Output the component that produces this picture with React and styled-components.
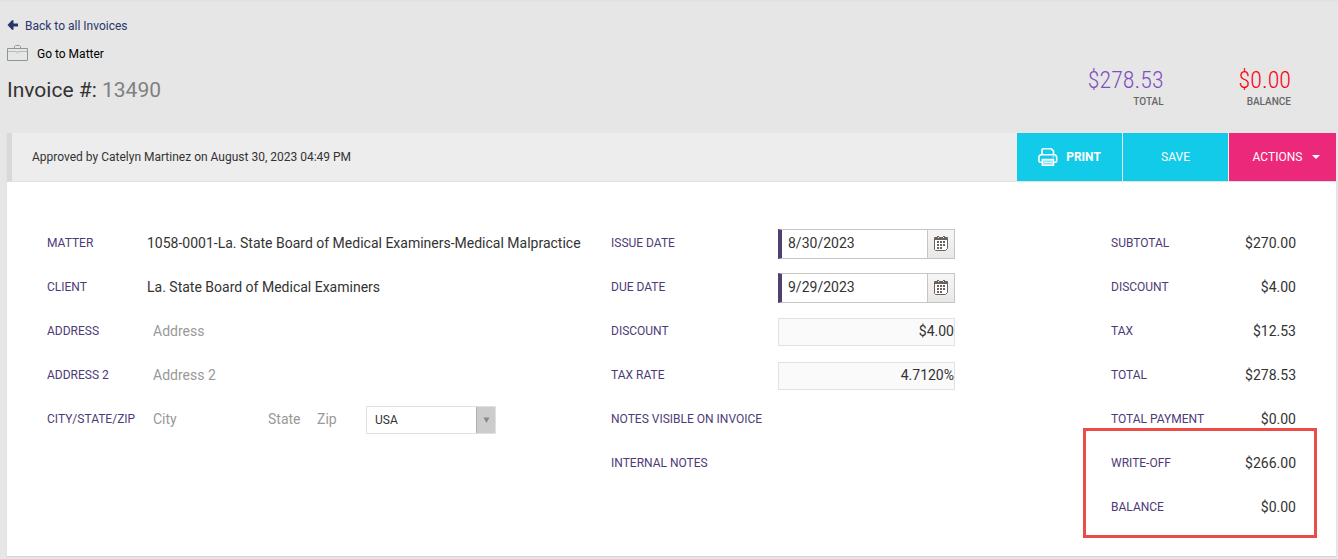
import styled, { createGlobalStyle, css } from 'styled-components'

const GlobalStyle = createGlobalStyle`
    * {
        box-sizing: border-box;
    }
    body {
        margin: 0;
        background: #e6e6e6;
        color: #333;
        font-family: Roboto, "Liberation Sans", sans-serif;
        font-size: 14px;
    }
    button, input, select {
        font-family: inherit;
        color: inherit;
        border-radius: 0;
    }
`

const Page = styled.main`
    padding: 0 2px 3px 7px;
    border-top: 2px solid #e2e2e2;
`

const Header = styled.header`
    display: flex;
    justify-content: space-between;
    align-items: flex-end;
    height: 131px;
    padding: 10px 45px 24px 0;
`

const Heading = styled.div`
    display: flex;
    flex-direction: column;
    align-items: flex-start;
    align-self: flex-start;
    h1 {
        margin: 6px 0 0;
        font-size: 21px;
        font-weight: 400;
        line-height: 32px;
        span {
            color: #808080;
        }
    }
`

const NavLink = styled.a`
    display: flex;
    align-items: center;
    gap: ${({ $gap }) => $gap};
    height: 28px;
    color: ${({ $color }) => $color};
    font-size: 12px;
    text-decoration: none;
`

const Amounts = styled.div`
    display: flex;
    gap: 75px;
`

const Amount = styled.div`
    text-align: right;
    strong {
        display: block;
        color: ${({ $color }) => $color};
        font-family: "Roboto Condensed", Roboto, sans-serif;
        font-size: 24px;
        font-weight: 300;
        line-height: 28px;
    }
    span {
        display: block;
        color: #666;
        font-size: 10px;
        font-weight: 500;
        line-height: 15px;
    }
`

const Panel = styled.section`
    background: #fff;
    box-shadow: 0 1px 1px #d4d4d4;
`

const Toolbar = styled.div`
    display: flex;
    align-items: stretch;
    height: 49px;
    background: #ededed;
    border-bottom: 1px solid #e2e2e2;
    border-left: 5px solid #d8d8d8;
    p {
        flex: 1;
        margin: 0;
        padding-left: 20px;
        font-size: 12px;
        line-height: 48px;
    }
`

const Buttons = styled.div`
    display: flex;
    gap: 1px;
`

const ToolButton = styled.button`
    display: flex;
    align-items: center;
    justify-content: center;
    gap: ${({ $pink }) => ($pink ? '10px' : '8px')};
    width: ${({ $pink }) => ($pink ? '107px' : '105px')};
    padding: ${({ $pink }) => ($pink ? '0 0 0 8px' : '0')};
    border: 0;
    background: ${({ $pink }) => ($pink ? '#eb2879' : '#12cbe9')};
    color: #fff;
    font-size: 12px;
    font-weight: ${({ $bold }) => ($bold ? 700 : 400)};
`

const Columns = styled.div`
    display: grid;
    grid-template-columns: 564fr 500fr 185fr;
    padding: 39px 40px 27px;
`

const Row = styled.div`
    display: flex;
    align-items: center;
    height: 44px;
`

const labelText = css`
    color: #4d3b77;
    font-size: 12px;
    white-space: nowrap;
`

const Label = styled.label`
    ${labelText}
    flex: none;
    width: ${({ $width }) => $width};
`

const Value = styled.span`
    white-space: nowrap;
`

const PlainInput = styled.input`
    width: ${({ $width }) => $width};
    padding: 0 0 0 6px;
    border: 0;
    background: transparent;
    font-size: 14px;
    &::placeholder {
        color: #999;
        opacity: 1;
    }
`

const SelectBox = styled.div`
    position: relative;
    width: 130px;
    height: 28px;
    margin-top: 2px;
    select {
        width: 100%;
        height: 100%;
        padding: 0 24px 0 8px;
        border: 1px solid #e0e0e0;
        background: #fff;
        font-size: 12px;
        appearance: none;
    }
    span {
        position: absolute;
        top: 1px;
        right: 1px;
        bottom: 1px;
        display: flex;
        align-items: center;
        justify-content: center;
        width: 19px;
        border-left: 1px solid #b0b0b0;
        background: #ccc;
        pointer-events: none;
    }
`

const DateField = styled.div`
    display: flex;
    width: 177px;
    height: 30px;
    margin-top: 2px;
    border: 1px solid #c5c5c5;
    border-left: 4px solid #51406f;
    input {
        flex: 1;
        min-width: 0;
        padding: 0 6px 2px;
        border: 0;
        font-size: 14px;
    }
    button {
        display: flex;
        align-items: center;
        justify-content: center;
        width: 27px;
        padding: 0;
        border: 0;
        border-left: 1px solid #c5c5c5;
        background: linear-gradient(#f6f6f6, #e8e8e8);
    }
`

const NumberInput = styled.input`
    width: 177px;
    height: 28px;
    margin: 2px 0 0;
    padding: 0 0 2px;
    border: 1px solid #e2e2e2;
    background: #fafafa;
    font-size: 14px;
    text-align: right;
`

const Totals = styled.dl`
    margin: 0;
`

const TotalRow = styled(Row)`
    justify-content: space-between;
    dt {
        ${labelText}
    }
    dd {
        margin: 0;
    }
`

const Highlight = styled.div`
    position: relative;
    &::after {
        content: "";
        position: absolute;
        top: -13px;
        right: -21px;
        bottom: -9px;
        left: -28px;
        border: 3px solid #eb4c46;
        pointer-events: none;
    }
`

const ArrowIcon = () => (
    <svg width="11" height="12" viewBox="0 0 11 12" fill="#263667">
        <path d="M.5 5 5 .3H6.5V3.5H11.5V6.5H6.5V9.7H5Z" />
    </svg>
)

const BriefcaseIcon = () => (
    <svg width="22" height="18" viewBox="0 0 22 18" fill="none" stroke="#999">
        <path d="M.5 3.5h20v12H.5z" stroke="#8f9596" />
        <path d="M7.5 3.5v-2l1-1h4l1 1v2" />
        <path d="M1 6.5h8M12 6.5h8" stroke="#a9bcc0" />
        <path d="M9.5 6v1.5l1 1 1-1V6" stroke="#bbb" />
    </svg>
)

const PrinterIcon = () => (
    <svg width="20" height="18" viewBox="0 0 20 18" fill="none" stroke="#fff" strokeWidth="1.6">
        <path d="M4 7V2Q4 .8 5.2 .8h8L15.5 3v4" />
        <path d="M4 14.2H2.4Q.9 14.2.9 12.7V9.5Q.9 6.8 3.5 6.8h12.6q2.6 0 2.6 2.7v3.2q0 1.5-1.5 1.5H16" />
        <path d="M4.4 11.6h11v5.6h-11z" fill="#7fe2f2" />
        <path d="M6 14.4h8" strokeWidth="1" />
        <path d="M14.5 9h1.6" strokeWidth="1" />
    </svg>
)

const CaretIcon = () => (
    <svg width="8" height="4" viewBox="0 0 8 4" fill="#fff">
        <path d="M0 0H8L4 4Z" />
    </svg>
)

const SelectArrow = () => (
    <svg width="7" height="6" viewBox="0 0 7 6" fill="#888">
        <path d="M.5 .5h6L3.5 6Z" />
    </svg>
)

const CalendarIcon = () => (
    <svg width="14" height="16" viewBox="0 0 14 16">
        <path d="M.5 2.5h13v10l-2 2h-10l-1-1z" fill="#fff" stroke="#6b625e" />
        <path d="M0 2q0-1 1-1h12q1 0 1 1v2H0z" fill="#6b625e" />
        <path d="M3 0h2v2H3zM9 0h2v2H9z" fill="#6b625e" />
        <path d="M4.5 1v1M9.5 1v1" stroke="#eee" />
        <path
            d="M6 5h2v2H6zM9 5h2v2H9zM3 5h2v2H3zM3 8h2v2H3zM6 8h2v2H6zM9 8h2v2H9zM3 11h2v2H3zM6 11h2v2H6z"
            fill="#6b625e"
        />
    </svg>
)

const totals = [
    ['SUBTOTAL', '$270.00'],
    ['DISCOUNT', '$4.00'],
    ['TAX', '$12.53'],
    ['TOTAL', '$278.53'],
    ['TOTAL PAYMENT', '$0.00'],
]

const highlighted = [
    ['WRITE-OFF', '$266.00'],
    ['BALANCE', '$0.00'],
]

const renderTotal = ([name, amount]) => (
    <TotalRow key={name}>
        <dt>{name}</dt>
        <dd>{amount}</dd>
    </TotalRow>
)

const DateRow = ({ id, label, value }) => (
    <Row>
        <Label htmlFor={id} $width="167px">{label}</Label>
        <DateField>
            <input id={id} type="text" defaultValue={value} />
            <button type="button" aria-label={`Choose ${label.toLowerCase()}`}>
                <CalendarIcon />
            </button>
        </DateField>
    </Row>
)

const App = () => {
    return (
        <Page>
            <GlobalStyle />
            <Header>
                <Heading>
                    <NavLink href="#invoices" $color="#263667" $gap="7px">
                        <ArrowIcon />
                        Back to all Invoices
                    </NavLink>
                    <NavLink href="#matter" $color="#000" $gap="8px">
                        <BriefcaseIcon />
                        Go to Matter
                    </NavLink>
                    <h1>Invoice #: <span>13490</span></h1>
                </Heading>
                <Amounts>
                    <Amount $color="#7e4fc0">
                        <strong>$278.53</strong>
                        <span>TOTAL</span>
                    </Amount>
                    <Amount $color="#ff0011">
                        <strong>$0.00</strong>
                        <span>BALANCE</span>
                    </Amount>
                </Amounts>
            </Header>
            <Panel>
                <Toolbar>
                    <p>Approved by Catelyn Martinez on August 30, 2023 04:49 PM</p>
                    <Buttons>
                        <ToolButton type="button" $bold><PrinterIcon />PRINT</ToolButton>
                        <ToolButton type="button">SAVE</ToolButton>
                        <ToolButton type="button" $pink>ACTIONS<CaretIcon /></ToolButton>
                    </Buttons>
                </Toolbar>
                <Columns>
                    <div>
                        <Row>
                            <Label as="span" $width="100px">MATTER</Label>
                            <Value>1058-0001-La. State Board of Medical Examiners-Medical Malpractice</Value>
                        </Row>
                        <Row>
                            <Label as="span" $width="100px">CLIENT</Label>
                            <Value>La. State Board of Medical Examiners</Value>
                        </Row>
                        <Row>
                            <Label htmlFor="address" $width="100px">ADDRESS</Label>
                            <PlainInput id="address" placeholder="Address" $width="350px" />
                        </Row>
                        <Row>
                            <Label htmlFor="address2" $width="100px">ADDRESS 2</Label>
                            <PlainInput id="address2" placeholder="Address 2" $width="350px" />
                        </Row>
                        <Row>
                            <Label htmlFor="city" $width="100px">CITY/STATE/ZIP</Label>
                            <PlainInput id="city" placeholder="City" $width="115px" />
                            <PlainInput aria-label="State" placeholder="State" $width="49px" />
                            <PlainInput aria-label="Zip" placeholder="Zip" $width="55px" />
                            <SelectBox>
                                <select aria-label="Country" defaultValue="USA">
                                    <option>USA</option>
                                </select>
                                <span><SelectArrow /></span>
                            </SelectBox>
                        </Row>
                    </div>
                    <div>
                        <DateRow id="issue" label="ISSUE DATE" value="8/30/2023" />
                        <DateRow id="due" label="DUE DATE" value="9/29/2023" />
                        <Row>
                            <Label htmlFor="discount" $width="167px">DISCOUNT</Label>
                            <NumberInput id="discount" defaultValue="$4.00" />
                        </Row>
                        <Row>
                            <Label htmlFor="tax" $width="167px">TAX RATE</Label>
                            <NumberInput id="tax" defaultValue="4.7120%" />
                        </Row>
                        <Row>
                            <Label as="span" $width="167px">NOTES VISIBLE ON INVOICE</Label>
                        </Row>
                        <Row>
                            <Label as="span" $width="167px">INTERNAL NOTES</Label>
                        </Row>
                    </div>
                    <div>
                        <Totals>{totals.map(renderTotal)}</Totals>
                        <Highlight>
                            <Totals>{highlighted.map(renderTotal)}</Totals>
                        </Highlight>
                    </div>
                </Columns>
            </Panel>
        </Page>
    )
}

export default App
